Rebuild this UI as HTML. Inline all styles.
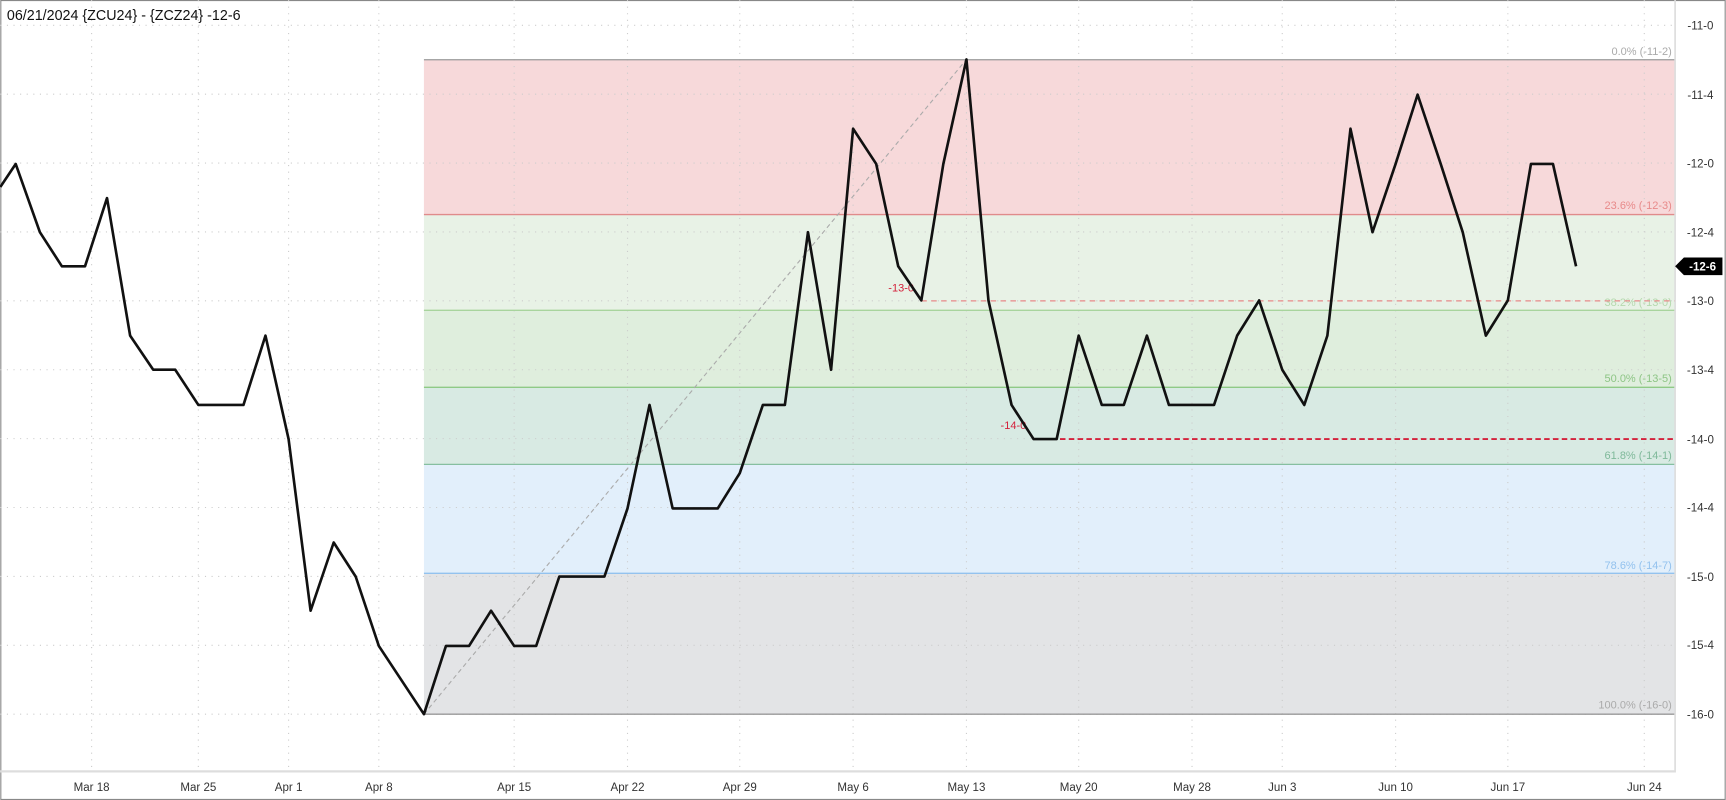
<!DOCTYPE html>
<html><head><meta charset="utf-8"><style>
html,body{margin:0;padding:0;background:#fff;}
svg{display:block;font-family:"Liberation Sans",sans-serif;}
</style></head><body>
<svg width="1726" height="800" viewBox="0 0 1568 727" xmlns="http://www.w3.org/2000/svg">
<rect x="0.5" y="0.5" width="1567" height="726" fill="#fff" stroke="#888"/>
<!-- fib zones -->
<rect x="385" y="54.3" width="1137" height="140.7" fill="#f7d9da"/>
<rect x="385" y="195" width="1137" height="87" fill="#e8f2e6"/>
<rect x="385" y="282" width="1137" height="70" fill="#dfeedd"/>
<rect x="385" y="352" width="1137" height="70" fill="#d8eae3"/>
<rect x="385" y="422" width="1137" height="99" fill="#e2effb"/>
<rect x="385" y="521" width="1137" height="128" fill="#e3e4e6"/>
<!-- grid -->
<g stroke="#ccc" stroke-dasharray="1,5" stroke-width="1">
<line x1="0" x2="1522" y1="23" y2="23"/><line x1="0" x2="1522" y1="85.6" y2="85.6"/>
<line x1="0" x2="1522" y1="148.2" y2="148.2"/><line x1="0" x2="1522" y1="210.8" y2="210.8"/>
<line x1="0" x2="1522" y1="273.4" y2="273.4"/><line x1="0" x2="1522" y1="336" y2="336"/>
<line x1="0" x2="1522" y1="398.6" y2="398.6"/><line x1="0" x2="1522" y1="461.2" y2="461.2"/>
<line x1="0" x2="1522" y1="523.8" y2="523.8"/><line x1="0" x2="1522" y1="586.4" y2="586.4"/>
<line x1="0" x2="1522" y1="649" y2="649"/>
<line x1="83" x2="83" y1="0" y2="700"/><line x1="180" x2="180" y1="0" y2="700"/>
<line x1="262" x2="262" y1="0" y2="700"/><line x1="344" x2="344" y1="0" y2="700"/>
<line x1="467" x2="467" y1="0" y2="700"/><line x1="570" x2="570" y1="0" y2="700"/>
<line x1="672" x2="672" y1="0" y2="700"/><line x1="775" x2="775" y1="0" y2="700"/>
<line x1="878" x2="878" y1="0" y2="700"/><line x1="980" x2="980" y1="0" y2="700"/>
<line x1="1083" x2="1083" y1="0" y2="700"/><line x1="1165" x2="1165" y1="0" y2="700"/>
<line x1="1268" x2="1268" y1="0" y2="700"/><line x1="1370" x2="1370" y1="0" y2="700"/>
<line x1="1494" x2="1494" y1="0" y2="700"/>
</g>
<!-- fib lines -->
<g stroke-width="1.2">
<line x1="385" x2="1522" y1="54.3" y2="54.3" stroke="#999"/>
<line x1="385" x2="1522" y1="195" y2="195" stroke="#e08b8b"/>
<line x1="385" x2="1522" y1="282" y2="282" stroke="#a8d49d"/>
<line x1="385" x2="1522" y1="352" y2="352" stroke="#8fca86"/>
<line x1="385" x2="1522" y1="422" y2="422" stroke="#86bfa0"/>
<line x1="385" x2="1522" y1="521" y2="521" stroke="#93c2ee"/>
<line x1="385" x2="1522" y1="649" y2="649" stroke="#999"/>
</g>
<g font-size="10" text-anchor="end">
<text x="1519" y="50" fill="#aaa">0.0% (-11-2)</text>
<text x="1519" y="190" fill="#e88a8a">23.6% (-12-3)</text>
<text x="1519" y="278" fill="#b5d9ae">38.2% (-13-0)</text>
<text x="1519" y="347" fill="#8dc585">50.0% (-13-5)</text>
<text x="1519" y="417" fill="#7fb99a">61.8% (-14-1)</text>
<text x="1519" y="517" fill="#93c2ee">78.6% (-14-7)</text>
<text x="1519" y="644" fill="#aaa">100.0% (-16-0)</text>
</g>
<line x1="385" y1="649" x2="878" y2="54" stroke="#aaa" stroke-dasharray="4,3"/>
<line x1="837" y1="273.4" x2="1522" y2="273.4" stroke="#e88a8a" stroke-dasharray="5,4" stroke-width="1.2"/>
<line x1="939" y1="399" x2="1522" y2="399" stroke="#d4223c" stroke-dasharray="5,3" stroke-width="1.8"/>
<text x="807" y="265" font-size="10" fill="#d4223c">-13-0</text>
<text x="909" y="390" font-size="10" fill="#d4223c">-14-0</text>
<polyline fill="none" stroke="#111" stroke-width="2.4" stroke-linejoin="round" points="0,170 14,149 36,211 56,242 77,242 97,180 118,305 139,336 159,336 180,368 200,368 221,368 241,305 262,399 282,555 303,493 323,524 344,587 385,649 405,587 426,587 446,555 467,587 487,587 508,524 528,524 549,524 570,462 590,368 611,462 631,462 652,462 672,430 693,368 713,368 734,211 755,336 775,117 796,149 816,242 837,273 857,149 878,54 898,273 919,368 939,399 960,399 980,305 1001,368 1021,368 1042,305 1062,368 1083,368 1103,368 1124,305 1144,273 1165,336 1185,368 1206,305 1227,117 1247,211 1268,149 1288,86 1309,149 1329,211 1350,305 1370,273 1391,149 1411,149 1432,242"/>
<!-- axes -->
<line x1="1522" y1="0" x2="1522" y2="702" stroke="#ddd" stroke-width="1.5"/>
<line x1="0" y1="701" x2="1522" y2="701" stroke="#ddd" stroke-width="2"/>
<g font-size="10.5" fill="#333" text-anchor="middle">
<text x="1545" y="27">-11-0</text><text x="1545" y="90">-11-4</text>
<text x="1545" y="152">-12-0</text><text x="1545" y="215">-12-4</text>
<text x="1545" y="277">-13-0</text><text x="1545" y="340">-13-4</text>
<text x="1545" y="403">-14-0</text><text x="1545" y="465">-14-4</text>
<text x="1545" y="528">-15-0</text><text x="1545" y="590">-15-4</text>
<text x="1545" y="653">-16-0</text>
<text x="83" y="719">Mar 18</text><text x="180" y="719">Mar 25</text>
<text x="262" y="719">Apr 1</text><text x="344" y="719">Apr 8</text>
<text x="467" y="719">Apr 15</text><text x="570" y="719">Apr 22</text>
<text x="672" y="719">Apr 29</text><text x="775" y="719">May 6</text>
<text x="878" y="719">May 13</text><text x="980" y="719">May 20</text>
<text x="1083" y="719">May 28</text><text x="1165" y="719">Jun 3</text>
<text x="1268" y="719">Jun 10</text><text x="1370" y="719">Jun 17</text>
<text x="1494" y="719">Jun 24</text>
</g>
<polygon points="1522,242 1530,234 1565,234 1565,250 1530,250" fill="#000"/>
<text x="1547" y="246" font-size="10.5" font-weight="bold" fill="#fff" text-anchor="middle">-12-6</text>
<text x="6" y="18" font-size="13" fill="#111">06/21/2024 {ZCU24} - {ZCZ24} -12-6</text>
</svg>
</body></html>
